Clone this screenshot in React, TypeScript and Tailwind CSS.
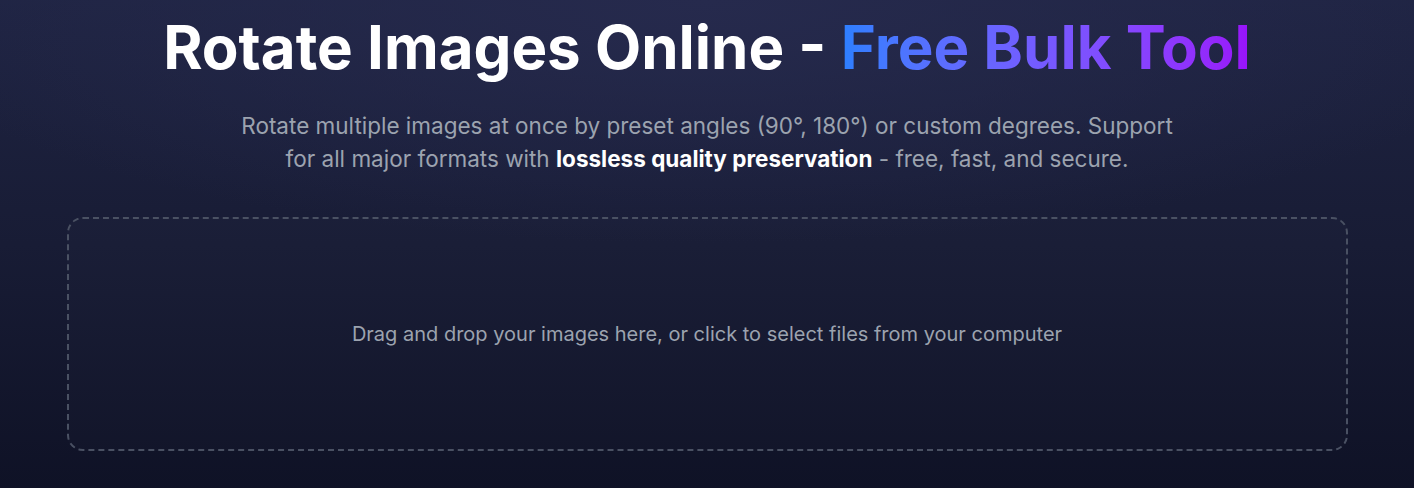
export default function App() {
  return (
    <div
      className="min-h-[488px] w-full bg-gradient-to-b from-[#1f2443] via-[#181c35] to-[#0f1226] text-white"
      style={{ fontFamily: 'Inter, "Noto Sans", sans-serif' }}
    >
      <div className="flex min-h-[488px] flex-col items-center bg-[radial-gradient(ellipse_60%_50%_at_50%_0%,#262a4d_0%,transparent_100%)] pt-[13px]">
        <h1 className="text-center text-[60px] font-bold leading-[68px]">
          Rotate Images Online -{" "}
          <span className="bg-gradient-to-r from-blue-500 to-purple-600 bg-clip-text text-transparent">
            Free Bulk Tool
          </span>
        </h1>
        <p className="mt-[28px] max-w-[950px] text-center text-[22.5px] leading-[33px] text-[#9ca3af]">
          Rotate multiple images at once by preset angles (90°, 180°) or custom degrees. Support for all major formats with{" "}
          <strong className="font-bold text-white">lossless quality preservation</strong> - free, fast, and secure.
        </p>
        <div className="mt-[42px] flex h-[234px] w-[1281px] items-center justify-center rounded-2xl border-2 border-dashed border-[#4a5163] bg-white/[0.01]">
          <p className="text-[20px] text-[#9ca3af]">
            Drag and drop your images here, or click to select files from your computer
          </p>
        </div>
      </div>
    </div>
  );
}
